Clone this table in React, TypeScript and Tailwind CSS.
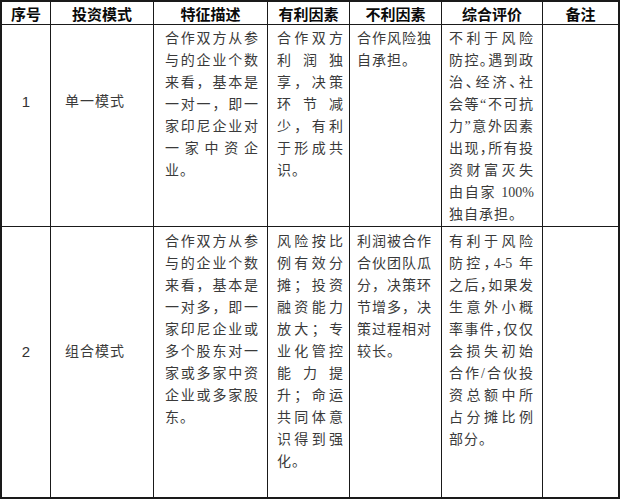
import React from "react";

const BODY =
  "[font-family:'Liberation_Serif','Noto_Sans_CJK_SC',serif] text-[14px] leading-[22px] tracking-[1px] text-[#3a3a3a]";
const HEAD =
  "flex items-center justify-center border-r border-b border-[#1a1a1a] [font-family:'Noto_Sans_CJK_SC',sans-serif] text-[15px] font-bold text-[#0a0a0a] leading-none";

function Lines({ lines, justify = true }: { lines: React.ReactNode[]; justify?: boolean }) {
  return (
    <>
      {lines.map((l, i) => (
        <div
          key={i}
          className={justify && i < lines.length - 1 ? "text-justify [text-align-last:justify]" : "text-left"}
        >
          {l}
        </div>
      ))}
    </>
  );
}

const headers = ["序号", "投资模式", "特征描述", "有利因素", "不利因素", "综合评价", "备注"];

export default function App() {
  return (
    <div className="bg-white w-[622px] h-[500px]">
      <div className="w-[620px] h-[499px] border-2 border-[#1a1a1a] grid grid-cols-[49px_103px_114px_82px_92px_101px_75px] grid-rows-[23px_202px_270px]">
        {headers.map((h, i) => (
          <div key={h} className={HEAD + (i === 6 ? " border-r-0" : "")}>
            {h}
          </div>
        ))}

        {/* Row 1 */}
        <div className="border-r border-b border-[#1a1a1a] pt-[66px] text-center [font-family:'Liberation_Sans',sans-serif] text-[15px] leading-[22px] text-[#333]">
          1
        </div>
        <div className={"border-r border-b border-[#1a1a1a] pt-[66px] pl-[14px] " + BODY}>单一模式</div>
        <div className={"border-r border-b border-[#1a1a1a] pt-[3px] pl-[11px] pr-[8px] " + BODY}>
          <Lines lines={["合作双方从参", "与的企业个数", "来看，基本是", "一对一，即一", "家印尼企业对", "一家中资企", "业。"]} />
        </div>
        <div className={"border-r border-b border-[#1a1a1a] pt-[3px] pl-[9px] pr-[5px] " + BODY}>
          <Lines lines={["合作双方", "利润独", "享，决策", "环节减", "少，有利", "于形成共", "识。"]} />
        </div>
        <div className={"border-r border-b border-[#1a1a1a] pt-[3px] pl-[7px] pr-[4px] " + BODY}>
          <Lines justify={false} lines={["合作风险独", "自承担。"]} />
        </div>
        <div className={"border-r border-b border-[#1a1a1a] pt-[3px] pl-[7px] pr-[8px] [font-feature-settings:'halt'] " + BODY}>
          <Lines
            lines={[
              "不利于风险",
              "防控。遇到政",
              "治、经济、社",
              "会等“不可抗",
              "力”意外因素",
              "出现，所有投",
              "资财富灭失",
              <>
                由自家 <span className="tracking-normal">100%</span>
              </>,
              "独自承担。",
            ]}
          />
        </div>
        <div className="border-b border-[#1a1a1a]" />

        {/* Row 2 */}
        <div className="border-r border-[#1a1a1a] pt-[114px] text-center [font-family:'Liberation_Sans',sans-serif] text-[15px] leading-[22px] text-[#333]">
          2
        </div>
        <div className={"border-r border-[#1a1a1a] pt-[114px] pl-[14px] " + BODY}>组合模式</div>
        <div className={"border-r border-[#1a1a1a] pt-[4px] pl-[11px] pr-[8px] " + BODY}>
          <Lines
            lines={[
              "合作双方从参",
              "与的企业个数",
              "来看，基本是",
              "一对多，即一",
              "家印尼企业或",
              "多个股东对一",
              "家或多家中资",
              "企业或多家股",
              "东。",
            ]}
          />
        </div>
        <div className={"border-r border-[#1a1a1a] pt-[4px] pl-[9px] pr-[5px] " + BODY}>
          <Lines
            lines={[
              "风险按比",
              "例有效分",
              "摊；投资",
              "融资能力",
              "放大；专",
              "业化管控",
              "能力提",
              "升；命运",
              "共同体意",
              "识得到强",
              "化。",
            ]}
          />
        </div>
        <div className={"border-r border-[#1a1a1a] pt-[4px] pl-[7px] pr-[4px] " + BODY}>
          <Lines justify={false} lines={["利润被合作", "合伙团队瓜", "分，决策环", "节增多，决", "策过程相对", "较长。"]} />
        </div>
        <div className={"border-r border-[#1a1a1a] pt-[4px] pl-[7px] pr-[8px] [font-feature-settings:'halt'] " + BODY}>
          <Lines
            lines={[
              "有利于风险",
              <>
                防控，<span className="tracking-normal">4-5</span> 年
              </>,
              "之后，如果发",
              "生意外小概",
              "率事件，仅仅",
              "会损失初始",
              "合作/合伙投",
              "资总额中所",
              "占分摊比例",
              "部分。",
            ]}
          />
        </div>
        <div />
      </div>
    </div>
  );
}
